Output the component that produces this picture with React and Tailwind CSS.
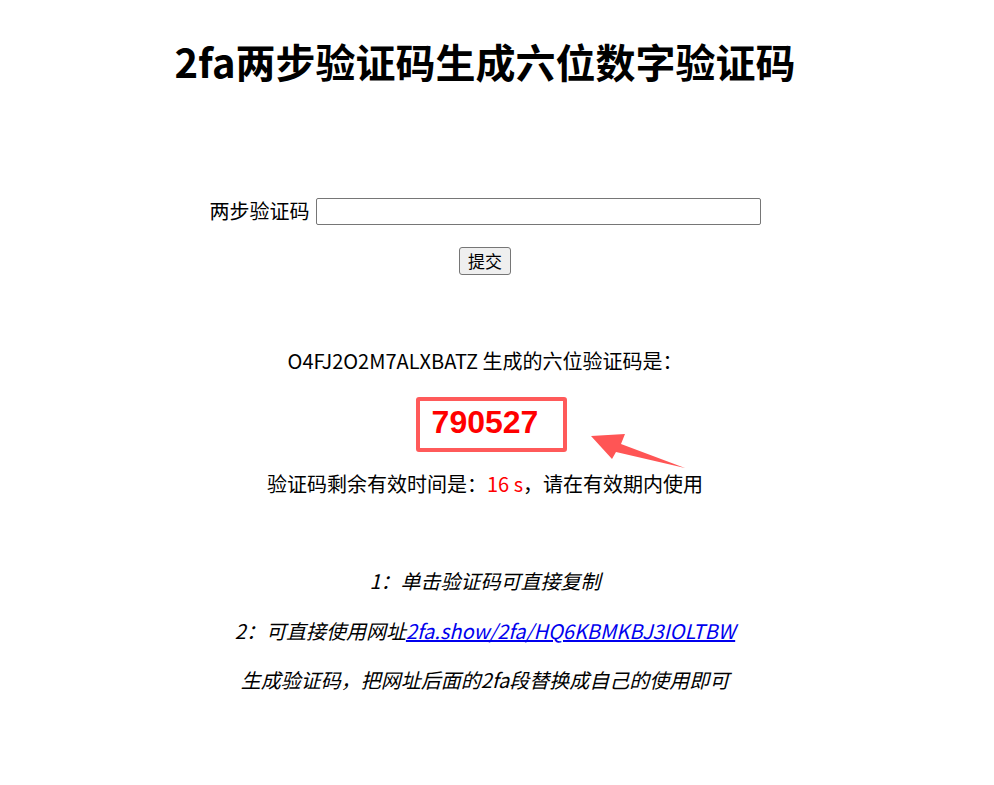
export default function App() {
  const font = { fontFamily: '"Noto Sans CJK SC", "Noto Sans", sans-serif' };
  return (
    <div className="w-[970px] bg-white text-black flex flex-col items-center" style={font}>
      <h1 className="mt-[37px] h-[48px] leading-[48px] text-[40px] font-bold whitespace-nowrap">
        2fa两步验证码生成六位数字验证码
      </h1>

      <div className="mt-[111px] h-[30px] flex items-center text-[20px] leading-[30px]">
        <span>两步验证码</span>
        <input
          type="text"
          className="ml-[6px] w-[445px] h-[27px] border border-[#767676] rounded-[2px] bg-white outline-none"
        />
      </div>

      <button className="mt-[21px] w-[52px] h-[28px] bg-[#efefef] border border-[#767676] rounded-[3px] text-[17px] leading-[26px] text-black">
        提交
      </button>

      <p className="mt-[71px] h-[30px] text-[20px] leading-[30px] whitespace-nowrap">
        O4FJ2O2M7ALXBATZ 生成的六位验证码是：
      </p>

      <div className="mt-[26px] h-[40px] relative">
        <span
          className="block text-[32px] font-bold leading-[40px] text-[#ff0000]"
          style={{ fontFamily: '"Liberation Sans", Arial, sans-serif' }}
        >
          790527
        </span>
        <div className="absolute left-[-16px] top-[-5px] w-[151px] h-[55px] border-[4px] border-[#ff5a5a] rounded-[3px]" />
        <svg
          className="absolute left-[158px] top-[28px]"
          width="100"
          height="40"
          viewBox="0 0 100 40"
        >
          <polygon
            points="1,6 35,4 31,14 95,38 26,22 22,29"
            fill="#ff5555"
          />
        </svg>
      </div>

      <p className="mt-[27px] h-[30px] text-[20px] leading-[30px] whitespace-nowrap">
        验证码剩余有效时间是：<span className="text-[#ff0000]">16 s</span>，请在有效期内使用
      </p>

      <p className="mt-[67px] h-[30px] text-[20px] leading-[30px] italic whitespace-nowrap">
        1：单击验证码可直接复制
      </p>
      <p className="mt-[20px] h-[30px] text-[20px] leading-[30px] italic whitespace-nowrap">
        2：可直接使用网址
        <a href="#" className="text-[#0000ee] underline">
          2fa.show/2fa/HQ6KBMKBJ3IOLTBW
        </a>
      </p>
      <p className="mt-[19px] h-[30px] text-[20px] leading-[30px] italic whitespace-nowrap">
        生成验证码，把网址后面的2fa段替换成自己的使用即可
      </p>
    </div>
  );
}
